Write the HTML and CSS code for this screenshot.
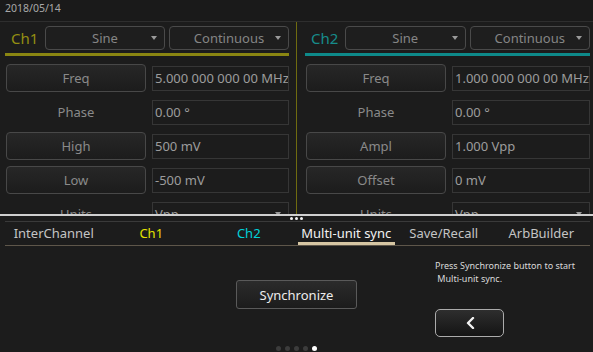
FILE: index.html
```html
<!DOCTYPE html>
<html lang="en">
<head>
    <meta charset="UTF-8">
    <meta name="viewport" content="width=device-width, initial-scale=1.0">
    <title>Multi-unit sync</title>
    <link rel="stylesheet" href="styles.css">
</head>
<body>
    <div class="date">2018/05/14</div>

    <div class="channels">
        <section class="channel ch1">
            <div class="ch-head">
                <span class="ch-name">Ch1</span>
                <div class="dropdown">Sine</div>
                <div class="dropdown">Continuous</div>
            </div>
            <div class="ch-rule"></div>
            <div class="params">
                <div class="param"><button class="param-btn">Freq</button><div class="value">5.000 000 000 00 MHz</div></div>
                <div class="param"><span class="param-label">Phase</span><div class="value">0.00 °</div></div>
                <div class="param"><button class="param-btn">High</button><div class="value">500 mV</div></div>
                <div class="param"><button class="param-btn">Low</button><div class="value">-500 mV</div></div>
                <div class="param"><span class="param-label">Units</span><div class="value select">Vpp</div></div>
            </div>
        </section>

        <section class="channel ch2">
            <div class="ch-head">
                <span class="ch-name">Ch2</span>
                <div class="dropdown">Sine</div>
                <div class="dropdown">Continuous</div>
            </div>
            <div class="ch-rule"></div>
            <div class="params">
                <div class="param"><button class="param-btn">Freq</button><div class="value">1.000 000 000 00 MHz</div></div>
                <div class="param"><span class="param-label">Phase</span><div class="value">0.00 °</div></div>
                <div class="param"><button class="param-btn">Ampl</button><div class="value">1.000 Vpp</div></div>
                <div class="param"><button class="param-btn">Offset</button><div class="value">0 mV</div></div>
                <div class="param"><span class="param-label">Units</span><div class="value select">Vpp</div></div>
            </div>
        </section>
    </div>

    <div class="divider"></div>
    <div class="grip"><span></span><span></span><span></span></div>

    <nav class="tabs">
        <div class="tab">InterChannel</div>
        <div class="tab tab-ch1">Ch1</div>
        <div class="tab tab-ch2">Ch2</div>
        <div class="tab active">Multi-unit sync</div>
        <div class="tab">Save/Recall</div>
        <div class="tab">ArbBuilder</div>
    </nav>

    <div class="tray">
        <button class="sync-btn">Synchronize</button>
        <div class="tray-side">
            <p class="hint">Press Synchronize button to start<br>&nbsp;Multi-unit sync.</p>
            <button class="back-btn" aria-label="Back">
                <svg width="10" height="12" viewBox="0 0 10 12">
                    <path d="M8 1 L3 6 L8 11" fill="none" stroke="#f2f2f2" stroke-width="2.4" stroke-linecap="round" stroke-linejoin="round"/>
                </svg>
            </button>
        </div>
    </div>

    <div class="pager">
        <span></span><span></span><span></span><span></span><span class="on"></span>
    </div>
</body>
</html>
```

FILE: styles.css
```css
body {
    margin: 0;
    height: 352px;
    overflow: hidden;
    display: flex;
    flex-direction: column;
    background-color: #1c1c1c;
    font-family: "Noto Sans", "Open Sans", sans-serif;
    color: #a0a0a0;
}

button {
    font-family: inherit;
    cursor: pointer;
}

.date {
    height: 21px;
    flex-shrink: 0;
    padding-left: 5px;
    font-size: 10.5px;
    line-height: 16px;
    color: #a8a8a8;
    background-color: #1a1a1a;
}

/* channel panels */
.channels {
    display: flex;
    height: 193px;
    flex-shrink: 0;
    box-sizing: border-box;
    border-top: 1px solid #2e2e2e;
    overflow: hidden;
}

.channel {
    box-sizing: border-box;
    padding-top: 4px;
}

.ch1 {
    width: 297px;
    padding-left: 5px;
    padding-right: 7px;
    border-right: 1px solid #6f6b10;
}

.ch2 {
    flex: 1;
    padding-left: 8px;
    padding-right: 3px;
}

.ch-head {
    display: flex;
    align-items: center;
    gap: 4px;
    height: 24px;
}

.ch-name {
    width: 36px;
    box-sizing: border-box;
    padding-left: 6px;
    font-size: 15px;
}

.ch1 .ch-name {
    color: #948f12;
}

.ch2 .ch-name {
    color: #178c8b;
}

.dropdown {
    flex: 1;
    position: relative;
    height: 24px;
    box-sizing: border-box;
    border: 1px solid #4a4a4a;
    border-radius: 4px;
    background-color: #1e1e1e;
    text-align: center;
    font-size: 13px;
    line-height: 22px;
    color: #858585;
}

.dropdown::after,
.value.select::after {
    content: "";
    position: absolute;
    right: 7px;
    top: 50%;
    margin-top: -2px;
    border-left: 3px solid transparent;
    border-right: 3px solid transparent;
    border-top: 4px solid #9a9a9a;
}

.ch-rule {
    height: 3px;
    margin-top: 3px;
}

.ch1 .ch-rule {
    background-color: #8a8612;
}

.ch2 .ch-rule {
    background-color: #0e8a8a;
}

.params {
    display: flex;
    flex-direction: column;
    gap: 6px;
    margin-top: 8px;
}

.param {
    display: flex;
    align-items: center;
    gap: 6px;
    height: 28px;
    flex-shrink: 0;
}

.param-btn,
.param-label {
    width: 140px;
    height: 28px;
    margin-left: 1px;
    box-sizing: border-box;
    font-size: 13px;
    line-height: 26px;
    text-align: center;
    color: #8a8a8a;
}

.param-btn {
    padding: 0;
    border: 1px solid #484848;
    border-radius: 4px;
    background: linear-gradient(#272727, #1c1c1c);
}

.param-label {
    border: 1px solid transparent;
}

.value {
    flex: 1;
    position: relative;
    height: 25px;
    box-sizing: border-box;
    border: 1px solid #363636;
    padding-left: 2px;
    font-size: 13px;
    line-height: 23px;
    color: #9c9c9c;
    white-space: nowrap;
    overflow: hidden;
}

/* split handle */
.divider {
    height: 2px;
    flex-shrink: 0;
    background-color: #cfcfcf;
}

.grip {
    height: 5px;
    flex-shrink: 0;
    display: flex;
    justify-content: center;
    align-items: center;
    gap: 2px;
}

.grip span {
    width: 3px;
    height: 3px;
    border-radius: 50%;
    background-color: #f0f0f0;
}

/* tabs */
.tabs {
    display: flex;
    flex-shrink: 0;
    margin: 0 3px 0 5px;
    border-top: 1px solid #3a3a3a;
    border-bottom: 1px solid #5e564a;
}

.tab {
    flex: 1;
    height: 23px;
    text-align: center;
    font-size: 13px;
    line-height: 23px;
    color: #c4c4c4;
    white-space: nowrap;
}

.tab-ch1 {
    color: #e4e400;
}

.tab-ch2 {
    color: #00d2d8;
}

.tab.active {
    color: #f2f2f2;
    box-shadow: inset 0 -3px #d6c6a3;
}

/* sync tray */
.tray {
    flex: 1;
    display: grid;
    grid-template-columns: 1fr auto 1fr;
    align-items: start;
}

.sync-btn {
    grid-column: 2;
    width: 121px;
    height: 29px;
    margin-top: 34px;
    border: 1px solid #5a5a5a;
    border-radius: 3px;
    background: linear-gradient(#2b2b2b, #1c1c1c);
    font-size: 13px;
    color: #ececec;
}

.tray-side {
    grid-column: 3;
    padding: 13px 0 0 78px;
}

.hint {
    margin: 0;
    font-size: 9px;
    line-height: 13px;
    color: #dadada;
    white-space: nowrap;
}

.back-btn {
    display: flex;
    align-items: center;
    justify-content: center;
    width: 69px;
    height: 28px;
    margin-top: 24px;
    padding: 0;
    border: 1.5px solid #ababab;
    border-radius: 5px;
    background: linear-gradient(#2e2e2e, #141414);
}

.pager {
    height: 9px;
    flex-shrink: 0;
    display: flex;
    justify-content: center;
    align-items: flex-end;
    gap: 4px;
    padding-bottom: 1px;
    box-sizing: border-box;
}

.pager span {
    width: 5px;
    height: 5px;
    border-radius: 50%;
    background-color: #3c3c3c;
}

.pager span.on {
    background-color: #ffffff;
}
```
